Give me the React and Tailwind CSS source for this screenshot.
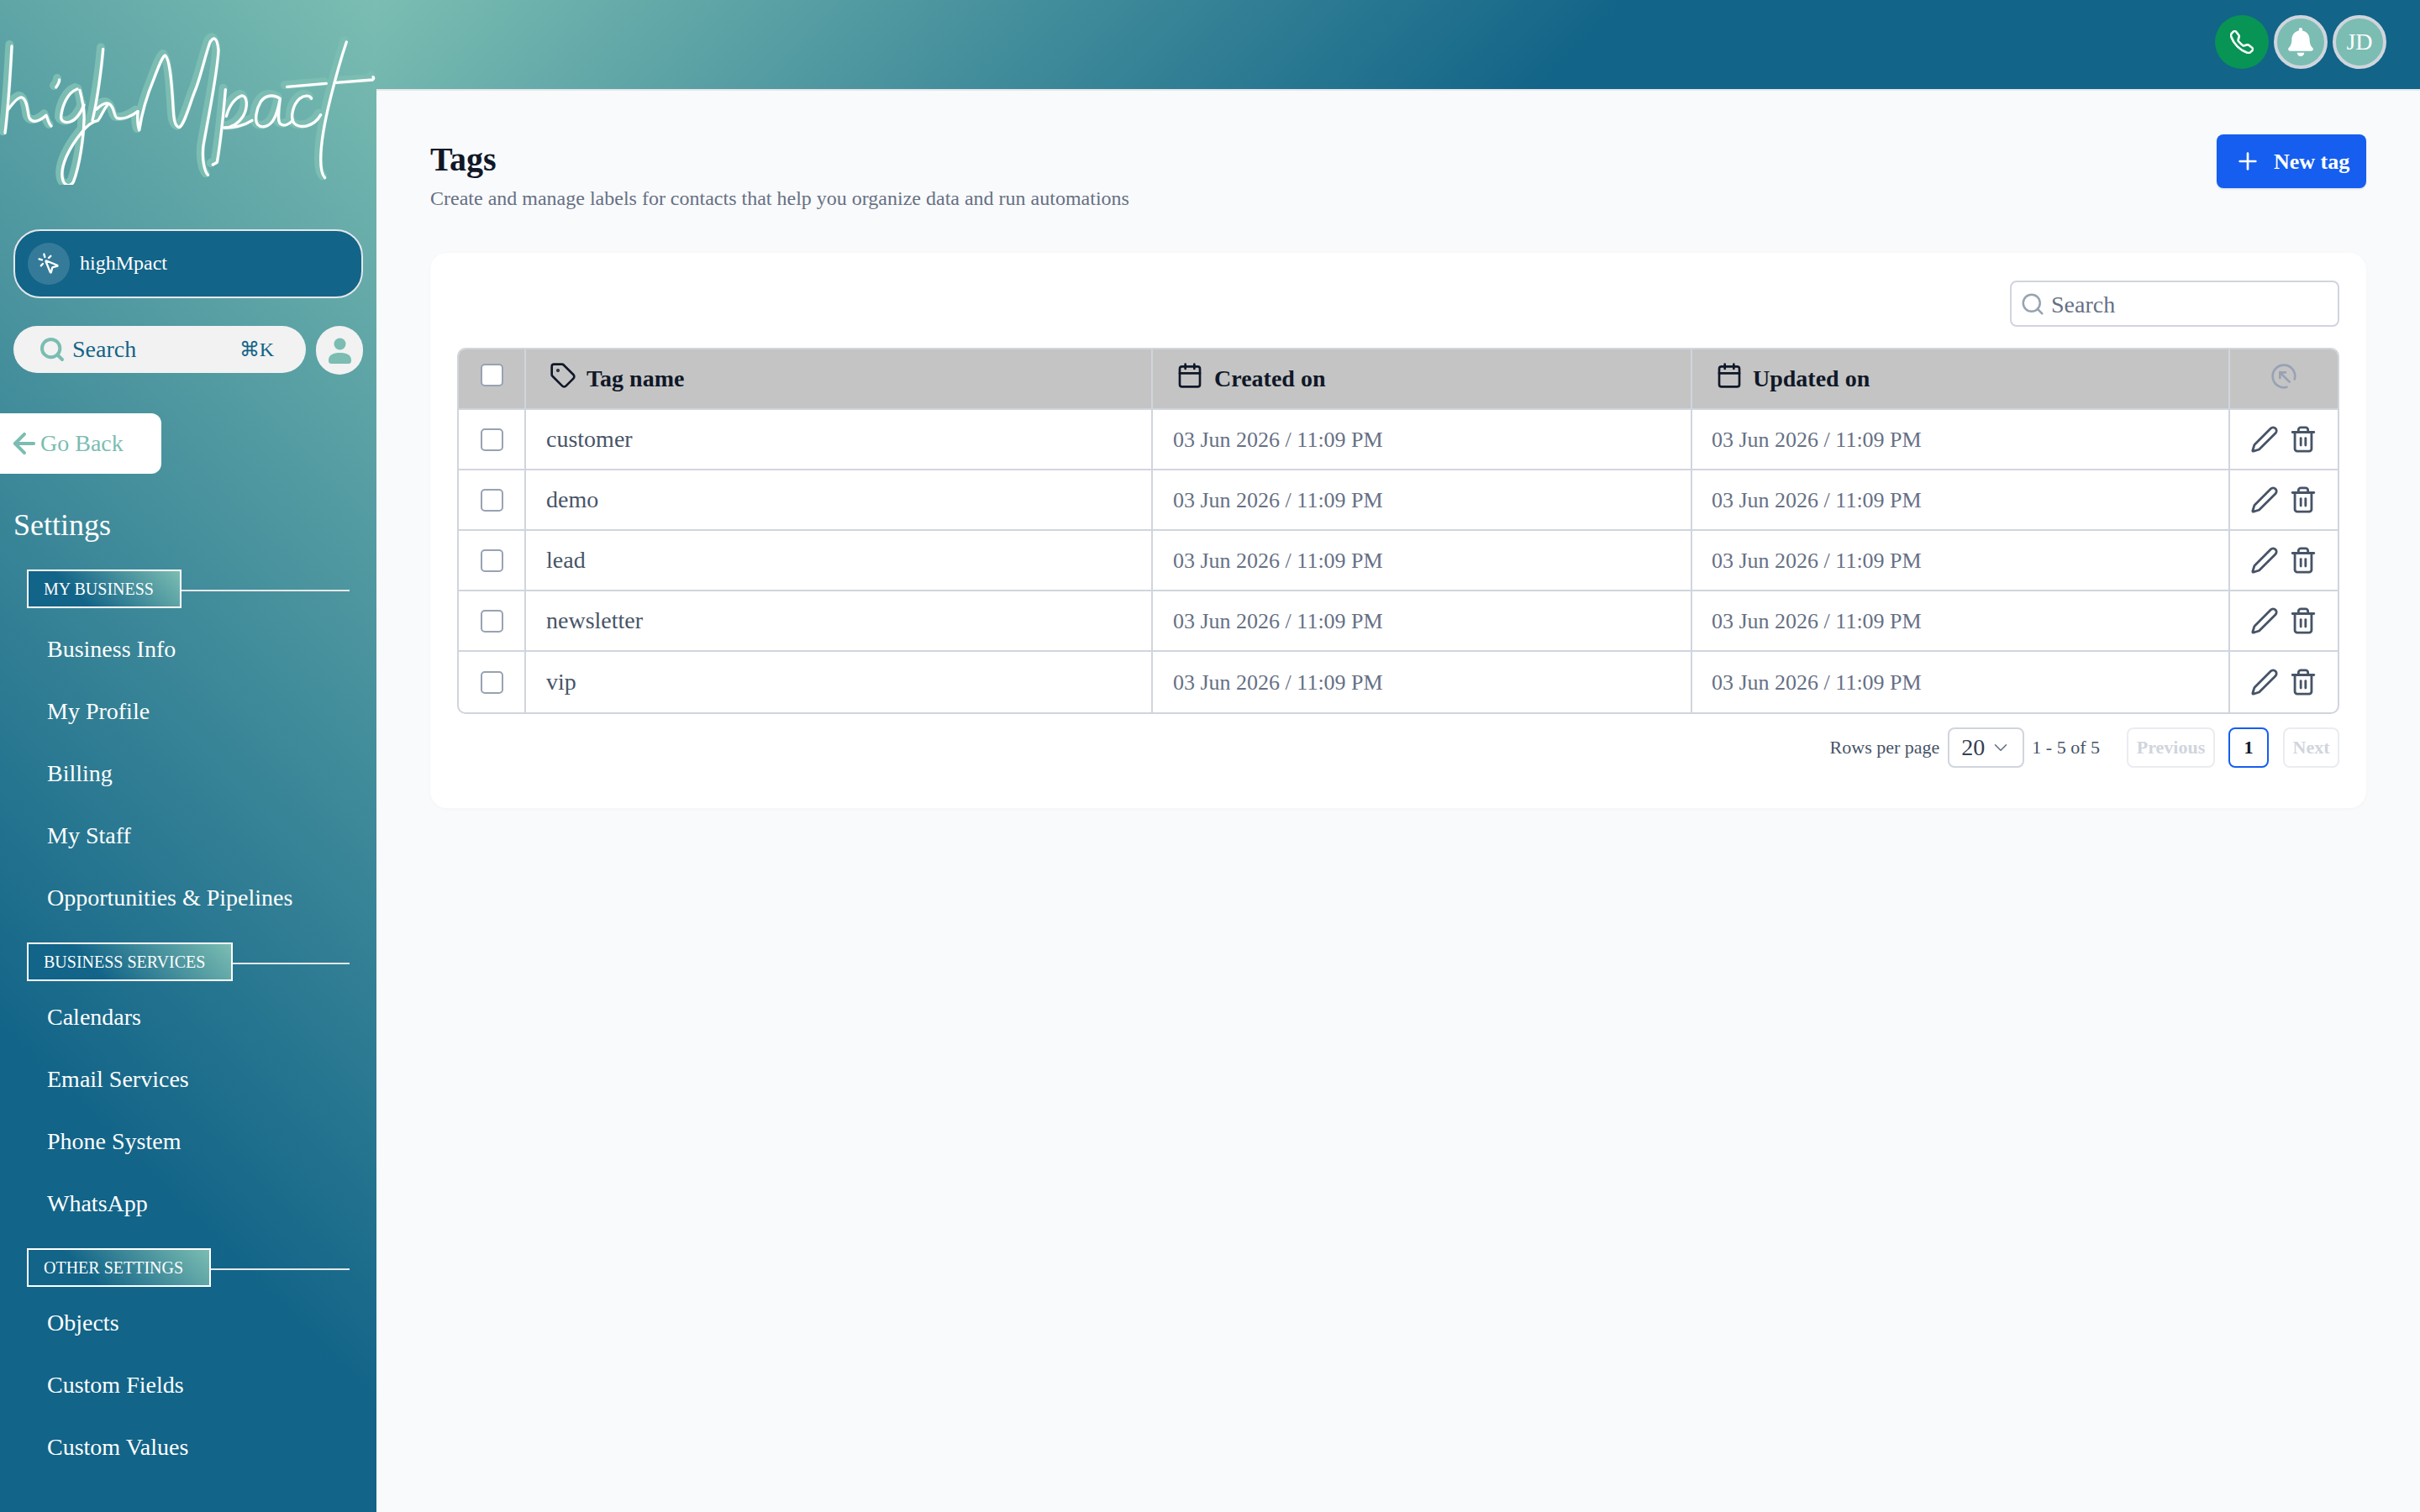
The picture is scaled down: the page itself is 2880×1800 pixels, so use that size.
import { Calendar, ChevronDown, MousePointerClick, Pen, Plus, Search, Tag, Trash2, ArrowLeft } from "lucide-react";
import { FaBell } from "react-icons/fa";
import { BsTelephone } from "react-icons/bs";

const logoPaths = [
  "M42 75 C38 150 30 290 18 385",
  "M30 300 C45 280 65 255 78 258 C100 265 98 320 105 332 C115 350 140 345 165 322 C170 330 172 350 183 360",
  "M212 195 C212 205 205 215 200 222",
  "M276 228 C240 240 222 290 218 325 C216 345 235 350 250 345 C270 340 285 320 300 285",
  "M285 232 C295 270 302 310 300 340 C298 400 285 500 262 560 C250 580 225 575 222 540 C218 500 245 440 290 385 C305 365 325 345 350 340 C362 325 370 300 385 283",
  "M368 85 C362 160 345 280 330 340",
  "M345 300 C360 285 375 275 388 280 C410 290 405 325 418 332 C440 338 470 325 492 308",
  "M492 308 C490 335 492 360 497 375 C505 320 525 250 550 190 C565 150 580 110 590 108 C605 120 612 190 618 290 C620 330 622 360 640 365 C660 355 680 270 700 225 C720 170 735 100 750 60 C760 45 775 35 780 90 C775 180 745 320 726 430 C720 480 730 520 742 535",
  "M805 230 C800 290 785 430 775 490 L760 498",
  "M808 325 C818 290 838 262 862 252 C885 250 885 295 868 325 C850 352 825 366 800 366 C830 368 870 360 900 340",
  "M1000 262 C975 245 945 250 930 275 C915 300 908 340 920 355 C935 370 960 362 975 340 C988 320 995 290 1000 262 C995 300 990 340 1000 352 C1015 365 1035 350 1045 340",
  "M1112 262 C1105 248 1085 250 1070 262 C1045 285 1035 330 1050 350 C1070 370 1120 365 1145 320",
  "M1237 60 C1220 110 1200 180 1180 260 C1160 340 1145 420 1145 480 C1145 510 1150 535 1160 545",
  "M1025 220 L1165 208 M1200 205 L1330 195 C1335 192 1335 188 1332 185",
];

const Logo = () => (
  <svg viewBox="0 0 1344 570" className="block w-[448px] h-[190px] mt-[30px] shrink-0" fill="none" strokeLinecap="round" strokeLinejoin="round">
    <g stroke="#7bbdb2" strokeWidth="30" transform="translate(-8 -6)">
      {logoPaths.map((d, i) => (
        <path key={i} d={d} />
      ))}
    </g>
    <g stroke="#ffffff" strokeWidth="10">
      {logoPaths.map((d, i) => (
        <path key={i} d={d} />
      ))}
    </g>
  </svg>
);

const UserGlyph = () => (
  <svg viewBox="0 0 27 31" className="w-[27px] h-[31px]" fill="#7bbdb2">
    <circle cx="13.5" cy="7.5" r="7" />
    <path d="M0 27 C0 20 6 18 13.5 18 S27 20 27 27 Q27 31 24 31 H3 Q0 31 0 27Z" />
  </svg>
);

const SectionTag = ({ label, className }) => (
  <div className={`flex items-center pl-[32px] pr-[32px] ${className}`}>
    <div className="h-[46px] flex items-center pl-[18px] pr-[31px] border-2 border-white text-[20px] text-white uppercase bg-[linear-gradient(45deg,#126488_32%,#7bbdb2_100%)]">
      {label}
    </div>
    <div className="flex-1 h-[2px] mt-[4px] bg-gray-200"></div>
  </div>
);

const NavItem = ({ label }) => (
  <div className="h-[74px] flex items-center pl-[56px] text-[28px] text-white">{label}</div>
);

const Sidebar = () => (
  <aside className="w-[448px] shrink-0 h-full overflow-hidden flex flex-col bg-[linear-gradient(225deg,#7bbdb2_0%,#126488_75%)]">
    <Logo />
    <div className="mx-[16px] mt-[53px] h-[82px] shrink-0 rounded-[32px] border-2 border-gray-200 bg-[#126488] flex items-center pl-[15px] gap-[12px]">
      <div className="w-[50px] h-[50px] rounded-full bg-white/15 flex items-center justify-center">
        <MousePointerClick size={28} color="#ffffff" strokeWidth={2} />
      </div>
      <span className="text-[24px] text-white mb-[2px]">highMpact</span>
    </div>
    <div className="mx-[16px] mt-[33px] flex items-start gap-[12px] shrink-0">
      <div className="w-[348px] h-[56px] rounded-full bg-[#f2f2f2] flex items-center pl-[30px] pr-[38px] text-[#126488]">
        <Search size={32} color="#7bbdb2" strokeWidth={3} />
        <span className="ml-[8px] flex-1 text-[28px]">Search</span>
        <span className="text-[24px]">⌘K</span>
      </div>
      <div className="w-[56px] h-[58px] rounded-full bg-[#f2f2f2] flex items-center justify-center">
        <UserGlyph />
      </div>
    </div>
    <div className="mt-[46px] w-[192px] h-[72px] shrink-0 rounded-r-[12px] bg-white flex items-center pl-[10px] text-[28px] text-[#7bbdb2]">
      <ArrowLeft size={38} strokeWidth={2.5} />
      <span>Go Back</span>
    </div>
    <div className="mt-[36px] h-[50px] shrink-0 pl-[16px] flex items-center text-[36px] text-white">Settings</div>
    <SectionTag label="My Business" className="mt-[28px]" />
    <div className="mt-[12px]">
      {["Business Info", "My Profile", "Billing", "My Staff", "Opportunities & Pipelines"].map((n) => (
        <NavItem key={n} label={n} />
      ))}
    </div>
    <SectionTag label="Business Services" className="mt-[16px]" />
    <div className="mt-[6px]">
      {["Calendars", "Email Services", "Phone System", "WhatsApp"].map((n) => (
        <NavItem key={n} label={n} />
      ))}
    </div>
    <SectionTag label="Other Settings" className="mt-[16px]" />
    <div className="mt-[6px]">
      {["Objects", "Custom Fields", "Custom Values"].map((n) => (
        <NavItem key={n} label={n} />
      ))}
    </div>
  </aside>
);

const Topbar = () => (
  <header className="h-[108px] shrink-0 border-b-2 border-gray-200 flex items-center justify-end gap-[6px] pr-[40px] pb-[6px] bg-[linear-gradient(135deg,#7bbdb2_0%,#126488_59%)]">
    <div className="w-[64px] h-[64px] rounded-full bg-[#079455] flex items-center justify-center">
      <BsTelephone size={28} color="#ffffff" stroke="#ffffff" strokeWidth={0.5} />
    </div>
    <div className="w-[64px] h-[64px] rounded-full bg-[#7bbdb2] border-[4px] border-[#d0d5dd] flex items-center justify-center">
      <FaBell size={34} color="#ffffff" />
    </div>
    <div className="w-[64px] h-[64px] rounded-full bg-[#7bbdb2] border-[4px] border-[#d0d5dd] flex items-center justify-center text-[28px] text-white">
      JD
    </div>
  </header>
);

const Checkbox = ({ className = "" }) => (
  <div className={`w-[27px] h-[27px] ml-[1px] rounded-[5px] bg-white border-2 border-[#98a2b3] ${className}`}></div>
);

const ColumnsIcon = () => (
  <svg viewBox="0 0 24 24" className="w-[32px] h-[32px] mb-[6px]" fill="none" stroke="#98a2b3" strokeWidth="2" strokeLinecap="round" strokeLinejoin="round">
    <path d="M21.6 14.6 A10 10 0 1 0 14.6 21.6" />
    <path d="M8.5 13.5 V8.5 H13.5" />
    <path d="M8.5 8.5 L17 17" />
  </svg>
);

const tags = ["customer", "demo", "lead", "newsletter", "vip"];
const gridCols = "grid grid-cols-[80px_746px_642px_640px_1fr]";

const TagsTable = () => (
  <div className="rounded-[10px] border-2 border-[#d0d5dd] overflow-hidden">
    <div className={`${gridCols} h-[72px] bg-[#c4c4c4] border-b-2 border-[#d0d5dd] text-[28px] font-bold text-[#101828]`}>
      <div className="border-r-2 border-[#d0d5dd] flex items-center justify-center">
        <Checkbox className="mb-[9px]" />
      </div>
      <div className="border-r-2 border-[#d0d5dd] flex items-center pl-[28px] gap-[12px]">
        <Tag size={32} strokeWidth={2} className="mb-[8px]" />
        <span>Tag name</span>
      </div>
      <div className="border-r-2 border-[#d0d5dd] flex items-center pl-[28px] gap-[13px]">
        <Calendar size={32} strokeWidth={2} className="mb-[8px]" />
        <span>Created on</span>
      </div>
      <div className="border-r-2 border-[#d0d5dd] flex items-center pl-[28px] gap-[12px]">
        <Calendar size={32} strokeWidth={2} className="mb-[8px]" />
        <span>Updated on</span>
      </div>
      <div className="flex items-center justify-center">
        <ColumnsIcon />
      </div>
    </div>
    {tags.map((t, i) => (
      <div key={t} className={`${gridCols} h-[72px] ${i < tags.length - 1 ? "border-b-2 border-[#d0d5dd]" : ""}`}>
        <div className="border-r-2 border-[#d0d5dd] flex items-center justify-center">
          <Checkbox />
        </div>
        <div className="border-r-2 border-[#d0d5dd] flex items-center pl-[24px] text-[28px] text-[#475467]">{t}</div>
        <div className="border-r-2 border-[#d0d5dd] flex items-center pl-[24px] text-[26px] text-[#667085]">03 Jun 2026 / 11:09 PM</div>
        <div className="border-r-2 border-[#d0d5dd] flex items-center pl-[23px] text-[26px] text-[#667085]">03 Jun 2026 / 11:09 PM</div>
        <div className="flex items-center pl-[24px] gap-[12px] text-[#475467]">
          <Pen size={34} strokeWidth={2} />
          <Trash2 size={34} strokeWidth={2} />
        </div>
      </div>
    ))}
  </div>
);

const Pagination = () => (
  <div className="mt-[16px] h-[48px] flex items-center justify-end text-[22px] text-[#475467]">
    <span className="mb-[2px]">Rows per page</span>
    <div className="ml-[10px] w-[91px] h-[48px] rounded-[8px] border-2 border-[#d0d5dd] flex items-center pl-[14px] gap-[6px] text-[28px] text-[#344054]">
      <span>20</span>
      <ChevronDown size={26} strokeWidth={1.5} color="#667085" />
    </div>
    <span className="ml-[9px] mb-[2px]">1 - 5 of 5</span>
    <div className="ml-[32px] w-[105px] h-[48px] pb-[2px] rounded-[8px] border-2 border-[#eaecf0] flex items-center justify-center font-bold text-[#d0d5dd]">Previous</div>
    <div className="ml-[16px] w-[48px] h-[48px] pb-[2px] rounded-[8px] border-2 border-[#155eef] flex items-center justify-center font-bold text-[#101828]">1</div>
    <div className="ml-[17px] w-[67px] h-[48px] pb-[2px] rounded-[8px] border-2 border-[#eaecf0] flex items-center justify-center font-bold text-[#d0d5dd]">Next</div>
  </div>
);

const Main = () => (
  <main className="flex-1 overflow-hidden px-[64px] pt-[52px]">
    <div className="flex justify-between items-start">
      <div className="pt-[4px]">
        <h1 className="h-[52px] leading-[52px] text-[40px] font-bold text-[#101828]">Tags</h1>
        <p className="mt-[2px] h-[36px] leading-[36px] text-[24px] text-[#667085]">
          Create and manage labels for contacts that help you organize data and run automations
        </p>
      </div>
      <button className="w-[178px] h-[64px] rounded-[8px] bg-[#155eef] text-white text-[26px] font-bold flex items-center pl-[21px] gap-[15px] shadow-sm">
        <Plus size={32} strokeWidth={2} />
        New tag
      </button>
    </div>
    <section className="mt-[47px] rounded-[20px] bg-white px-[32px] pt-[33px] pb-[48px] shadow-[0_1px_4px_rgba(16,24,40,0.03)]">
      <div className="flex justify-end mb-[25px]">
        <div className="w-[392px] h-[55px] rounded-[8px] border-2 border-[#d0d5dd] flex items-center pl-[10px] gap-[7px] text-[28px] text-[#667085]">
          <Search size={30} strokeWidth={2} color="#98a2b3" />
          <span className="pt-[2px]">Search</span>
        </div>
      </div>
      <TagsTable />
      <Pagination />
    </section>
  </main>
);

const App = () => (
  <div className="flex h-screen w-full overflow-hidden bg-[#f9fafb] font-['Liberation_Serif',serif]">
    <Sidebar />
    <div className="flex-1 flex flex-col min-w-0">
      <Topbar />
      <Main />
    </div>
  </div>
);

export default App;
